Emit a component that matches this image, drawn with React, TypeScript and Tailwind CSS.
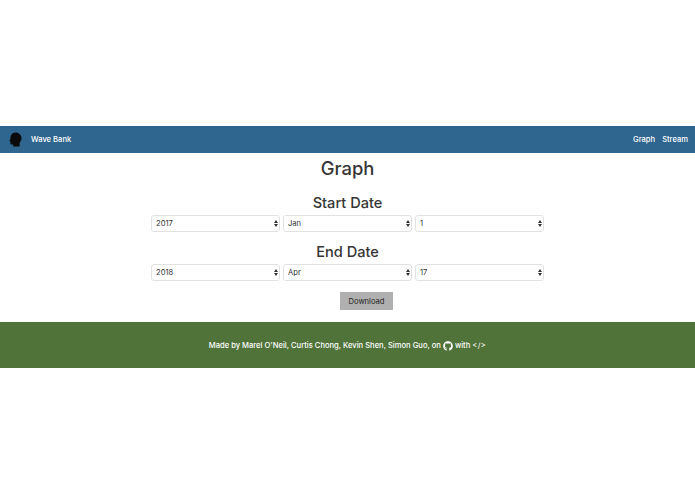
import { FaGithub } from 'react-icons/fa';

const months = ['Jan', 'Feb', 'Mar', 'Apr', 'May', 'Jun', 'Jul', 'Aug', 'Sep', 'Oct', 'Nov', 'Dec'];

function Select({ value, options }: { value: string; options: string[] }) {
  return (
    <div className="relative flex-1">
      <select
        defaultValue={value}
        className="block w-full h-[17px] appearance-none rounded-[3px] border border-[#e2e2e2] bg-white pl-[4px] text-[7.6px] leading-none text-[#333] outline-none"
      >
        {options.map((o) => (
          <option key={o} value={o}>{o}</option>
        ))}
      </select>
      <svg className="absolute right-[2px] top-[5px] w-[4px] h-[7px] pointer-events-none" viewBox="0 0 4 7" fill="#333">
        <path d="M2 0 L4 3 L0 3 Z" />
        <path d="M0 4 L4 4 L2 7 Z" />
      </svg>
    </div>
  );
}

function DateRow({ title, year, month, day }: { title: string; year: string; month: string; day: string }) {
  return (
    <div>
      <h2 className="text-center text-[14.6px] leading-[18px] font-medium text-[#363636]">{title}</h2>
      <div className="flex gap-[3px] mt-[3px]">
        <Select value={year} options={['2016', '2017', '2018']} />
        <Select value={month} options={months} />
        <Select value={day} options={['1', '17']} />
      </div>
    </div>
  );
}

export default function App() {
  return (
    <div className="min-h-[494px] bg-white font-['Inter',Arial,sans-serif]">
      <div className="h-[126px]"></div>

      {/* Navbar */}
      <nav className="h-[27px] bg-[#2f668f] flex items-center justify-between pl-[9px] pr-[7px] text-[7.6px] font-medium text-white">
        <div className="flex items-center">
          <svg className="w-[13px] h-[15px]" viewBox="0 0 13 15" fill="#0a0a0a">
            <path d="M6.5 0.5 C10 0.5 12.5 3 12.5 6.2 C12.5 8.6 11.2 9.8 10.6 10.8 L10.6 14.5 L4.2 14.5 L4.2 12.6 L2.6 12.6 C1.6 12.6 1.4 11.8 1.4 11 L1.4 9.6 L0.3 9.1 L1.4 7 C1.2 3.4 3.2 0.5 6.5 0.5 Z" />
          </svg>
          <span className="ml-[9px]">Wave Bank</span>
        </div>
        <div className="flex gap-[7px]">
          <span>Graph</span>
          <span>Stream</span>
        </div>
      </nav>

      {/* Graph form */}
      <main className="h-[169px] w-[393px] mx-auto pt-[4px]">
        <h1 className="text-center text-[18.4px] leading-[23px] font-medium text-[#363636]">Graph</h1>
        <div className="mt-[14px]">
          <DateRow title="Start Date" year="2017" month="Jan" day="1" />
        </div>
        <div className="mt-[11px]">
          <DateRow title="End Date" year="2018" month="Apr" day="17" />
        </div>
        <div className="flex justify-center pl-[38px] mt-[11px]">
          <button className="w-[53px] h-[18px] pt-[1px] bg-[#b0b0b0] text-[7.6px] text-[#222]">Download</button>
        </div>
      </main>

      {/* Footer */}
      <footer className="h-[46px] pt-[2px] bg-[#50733a] flex items-center justify-center text-[7.6px] font-medium text-white">
        <span>Made by Marel O'Neil, Curtis Chong, Kevin Shen, Simon Guo, on</span>
        <FaGithub className="mx-[2px] w-[10px] h-[10px]" />
        <span>with</span>
        <span className="ml-[2px] font-normal tracking-[0.4px]">&lt;/&gt;</span>
      </footer>
    </div>
  );
}
